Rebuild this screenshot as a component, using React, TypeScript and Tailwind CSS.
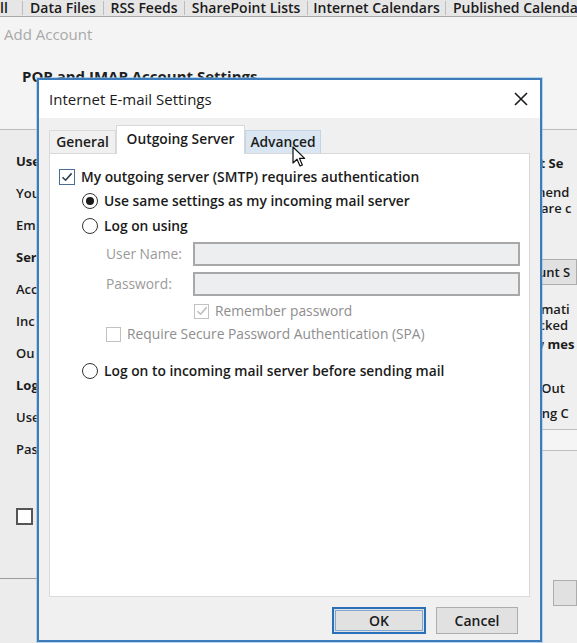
const backTabs: { label: string; w: string }[] = [
  { label: 'll', w: 'w-[23px] justify-start' },
  { label: 'Data Files', w: 'w-[81px] justify-center' },
  { label: 'RSS Feeds', w: 'w-[81px] justify-center' },
  { label: 'SharePoint Lists', w: 'w-[123px] justify-center' },
  { label: 'Internet Calendars', w: 'w-[138px] justify-center' },
  { label: 'Published Calendars', w: 'w-[150px] justify-start pl-[7px]' }
];

const leftLabels: { text: string; bold?: boolean }[] = [
  { text: 'Use', bold: true },
  { text: 'You' },
  { text: 'Em' },
  { text: 'Ser', bold: true },
  { text: 'Acc' },
  { text: 'Inc' },
  { text: 'Ou' },
  { text: 'Log', bold: true },
  { text: 'Use' },
  { text: 'Pas' }
];

function Radio({ checked }: { checked?: boolean }) {
  return (
    <span className="flex h-[16px] w-[16px] shrink-0 items-center justify-center rounded-full border-[1.5px] border-[#333] bg-white">
      {checked ? <span className="h-[8px] w-[8px] rounded-full bg-[#1a1a1a]" /> : null}
    </span>
  );
}

function Check({ checked, disabled, size = 16 }: { checked?: boolean; disabled?: boolean; size?: number }) {
  const border = disabled ? 'border-[#c2c2c2]' : 'border-[#4a6d96]';
  const stroke = disabled ? '#bdbdbd' : '#2c3e55';
  return (
    <span
      className={`flex shrink-0 items-center justify-center border-[1.5px] bg-white ${border} ${size === 16 ? 'h-[16px] w-[16px]' : 'h-[15px] w-[15px]'}`}
    >
      {checked ? (
        <svg width="12" height="12" viewBox="0 0 12 12">
          <path d="M1.5 6.2 L4.6 9.2 L10.6 2.4" fill="none" stroke={stroke} strokeWidth="1.6" />
        </svg>
      ) : null}
    </span>
  );
}

function Cursor() {
  return (
    <svg width="14" height="22" viewBox="0 0 14 22" className="absolute left-[292px] top-[146px]">
      <path d="M1 1 L1 17 L5 13.2 L8 20 L10.4 19 L7.5 12.4 L12.6 12.4 Z" fill="white" stroke="#111" strokeWidth="1.2" strokeLinejoin="round" />
    </svg>
  );
}

export default function App() {
  return (
    <div className="relative h-[643px] w-[577px] overflow-hidden bg-[#f4f4f4] font-['Open_Sans',sans-serif] text-[#1b1b1b]">
      {/* outlook account settings behind the dialog */}
      <div className="flex h-[17px] items-center overflow-hidden whitespace-nowrap border-b border-[#a9a9a9] bg-[#e6e6e6] text-[14px] font-semibold leading-none">
        {backTabs.map((t) => (
          <span key={t.label} className={`flex shrink-0 border-r border-[#bdbdbd] ${t.w}`}>
            {t.label}
          </span>
        ))}
      </div>
      <div className="h-[113px] border-b border-[#bcbcbc] pl-[4px] pt-[7px]">
        <p className="text-[15px] leading-[20px] text-[#a9a9a9]">Add Account</p>
        <p className="ml-[18px] mt-[22px] text-[15px] font-bold leading-[20px] text-[#1e1e1e]">POP and IMAP Account Settings</p>
      </div>
      <div className="flex h-[513px]">
        <div className="flex w-[40px] flex-col bg-[#ececec] pl-[16px] text-[13px] font-semibold">
          <div className="h-[16px]" />
          {leftLabels.map((l, i) => (
            <div key={i} className={`flex h-[32px] items-center whitespace-nowrap ${l.bold ? 'font-bold' : ''}`}>
              {l.text}
            </div>
          ))}
          <span className="mt-[42px] h-[17px] w-[17px] border-2 border-[#555] bg-white" />
          <div className="-ml-[16px] mt-[53px] border-t border-[#9c9c9c]" />
        </div>
        <div className="flex-1" />
        <div className="flex w-[40px] flex-col overflow-hidden whitespace-nowrap bg-[#efefef] text-[13px] font-semibold">
          <div className="mt-[24px] -ml-[6px] font-bold leading-[18px]">nt Se</div>
          <div className="mt-[12px] -ml-[4px] leading-[16px]">mend</div>
          <div className="ml-[4px] leading-[16px]">are c</div>
          <div className="mt-[43px] ml-[-10px] h-[26px] border border-[#adadad] bg-[#e1e1e1] pl-[10px] leading-[24px]">unt S</div>
          <div className="mt-[16px] -ml-[4px] leading-[16px]">omati</div>
          <div className="-ml-[2px] leading-[16px]">icked</div>
          <div className="mt-[3px] -ml-[4px] font-bold leading-[16px]">w mes</div>
          <div className="mt-[28px] -ml-[6px] leading-[16px]">y Out</div>
          <div className="mt-[9px] -ml-[4px] leading-[16px]">ting C</div>
          <div className="mt-[8px] h-[22px] border-y border-[#bdbdbd] bg-[#f5f5f5]" />
          <div className="ml-[16px] mt-[129px] h-[26px] border border-[#adadad] bg-[#e1e1e1]" />
        </div>
      </div>

      {/* Internet E-mail Settings dialog */}
      <div className="absolute left-[37px] top-[78px] flex h-[564px] w-[505px] flex-col border-2 border-[#3d7bbb] bg-[#f0f0f0] shadow-[0_0_0_1px_rgba(140,190,230,0.6)]">
        <div className="flex h-[38px] items-center justify-between bg-white pl-[10px] pr-[11px]">
          <span className="text-[15px] font-medium">Internet E-mail Settings</span>
          <svg width="16" height="16" viewBox="0 0 16 16">
            <path d="M2 2 L14 14 M14 2 L2 14" stroke="#1b1b1b" strokeWidth="1.6" />
          </svg>
        </div>
        <div className="flex flex-1 flex-col px-[10px] pt-[7px]">
          <div className="flex items-end text-[13.8px] font-semibold">
            <div className="mb-[-1px] flex h-[24px] w-[67px] items-center justify-center border border-[#d9d9d9] bg-[#f0f0f0]">General</div>
            <div className="relative z-10 mb-[-1px] flex h-[29px] w-[129px] items-center justify-center border border-b-0 border-[#d9d9d9] bg-white pb-[2px]">
              Outgoing Server
            </div>
            <div className="mb-[-1px] flex h-[24px] w-[76px] items-center justify-center border border-[#c3d4e5] bg-[#dae6f1]">Advanced</div>
          </div>
          <div className="flex h-[444px] flex-col border border-[#d9d9d9] bg-white text-[13.8px] font-semibold">
            <div className="ml-[9px] mt-[14px] flex h-[18px] items-center gap-[6px]">
              <Check checked />
              <span>My outgoing server (SMTP) requires authentication</span>
            </div>
            <div className="ml-[32px] mt-[6px] flex h-[18px] items-center gap-[6px]">
              <Radio checked />
              <span>Use same settings as my incoming mail server</span>
            </div>
            <div className="ml-[32px] mt-[7px] flex h-[18px] items-center gap-[6px]">
              <Radio />
              <span>Log on using</span>
            </div>
            <div className="ml-[56px] mt-[7px] flex h-[24px] items-center font-normal text-[#9a9a9a]">
              <span className="w-[87px]">User Name:</span>
              <span className="h-[24px] w-[327px] border-2 border-[#a8a8a8] bg-[#eceef0]" />
            </div>
            <div className="ml-[56px] mt-[6px] flex h-[24px] items-center font-normal text-[#9a9a9a]">
              <span className="w-[87px]">Password:</span>
              <span className="h-[24px] w-[327px] border-2 border-[#a8a8a8] bg-[#eceef0]" />
            </div>
            <div className="ml-[144px] mt-[7px] flex h-[16px] items-center gap-[6px] font-normal text-[#8e8e8e]">
              <Check checked disabled size={15} />
              <span>Remember password</span>
            </div>
            <div className="ml-[56px] mt-[7px] flex h-[16px] items-center gap-[6px] font-normal text-[#8e8e8e]">
              <Check disabled size={15} />
              <span>Require Secure Password Authentication (SPA)</span>
            </div>
            <div className="ml-[32px] mt-[20px] flex h-[18px] items-center gap-[6px]">
              <Radio />
              <span>Log on to incoming mail server before sending mail</span>
            </div>
          </div>
          <div className="mt-[10px] flex justify-end gap-[10px] pr-[12px] text-[14px] font-semibold">
            <button className="h-[27px] w-[94px] border-2 border-[#2a70b8] bg-[#e1e1e1] outline outline-1 -outline-offset-4 outline-[#7ea9d4]">OK</button>
            <button className="h-[27px] w-[82px] border border-[#adadad] bg-[#e1e1e1]">Cancel</button>
          </div>
        </div>
      </div>
      <Cursor />
    </div>
  );
}
